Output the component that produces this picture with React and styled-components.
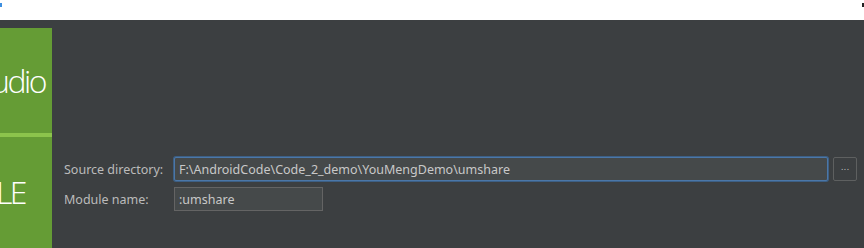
import styled, { createGlobalStyle } from "styled-components";

const GlobalStyle = createGlobalStyle`
  html, body {
    margin: 0;
    padding: 0;
    background: #3c3f41;
  }
  body {
    font-family: "Noto Sans", "Open Sans", sans-serif;
  }
`;

const Page = styled.div`
  width: 864px;
  height: 248px;
  display: flex;
  flex-direction: column;
  overflow: hidden;
`;

const TitleBar = styled.div`
  height: 20px;
  background: #ffffff;
  position: relative;
  flex-shrink: 0;
`;

const TitleMark = styled.span`
  position: absolute;
  top: 3px;
  width: 2px;
  height: 4px;
  background: ${(p) => p.$color};
  ${(p) => (p.$right ? "right: 0;" : "left: 0;")}
`;

const Body = styled.div`
  flex: 1;
  display: flex;
  background: #3c3f41;
`;

const Banner = styled.div`
  width: 52px;
  margin-top: 8px;
  background: #659c35;
  display: flex;
  flex-direction: column;
  overflow: hidden;
  flex-shrink: 0;
`;

const BannerBlock = styled.div`
  box-sizing: border-box;
  height: ${(p) => p.$height}px;
  display: flex;
  align-items: flex-start;
  justify-content: flex-end;
  padding: ${(p) => p.$top}px ${(p) => p.$pad}px 0 0;
  color: #ffffff;
  font-size: 32px;
  line-height: 32px;
  font-weight: 300;
  letter-spacing: -2.5px;
  white-space: nowrap;
  font-family: "Open Sans", "Noto Sans", sans-serif;
`;

const Stripe = styled.div`
  height: 4px;
  background: #8cc44c;
`;

const Content = styled.div`
  flex: 1;
  padding: 137px 7px 0 12px;
  display: flex;
  flex-direction: column;
  gap: 6px;
`;

const Row = styled.div`
  display: flex;
  align-items: center;
  height: 24px;
`;

const Label = styled.label`
  width: 110px;
  flex-shrink: 0;
  color: #bbbbbb;
  font-size: 12.5px;
`;

const Field = styled.div`
  box-sizing: border-box;
  height: 24px;
  ${(p) => (p.$grow ? "flex: 1;" : `width: ${p.$width}px;`)}
  background: #45494a;
  border: 1px solid ${(p) => (p.$focused ? "#4b77a8" : "#646464")};
  ${(p) =>
    p.$focused &&
    "box-shadow: 0 0 0 1px #3d5f84; border-radius: 2px;"}
  color: #c8c8c8;
  font-size: 12.5px;
  padding-left: 4px;
  display: flex;
  align-items: center;
  white-space: nowrap;
`;

const BrowseButton = styled.button`
  box-sizing: border-box;
  width: 24px;
  height: 24px;
  margin-left: 5px;
  background: #3c3f41;
  border: 1px solid #5e6060;
  border-radius: 2px;
  color: #bbbbbb;
  font-size: 9px;
  padding: 0 0 4px;
  display: flex;
  align-items: center;
  justify-content: center;
  font-family: "DejaVu Sans", sans-serif;
`;

export default function App() {
  return (
    <>
      <GlobalStyle />
      <Page>
        <TitleBar>
          <TitleMark $color="#3d8fe0" />
          <TitleMark $color="#222222" $right />
        </TitleBar>
        <Body>
          <Banner>
            <BannerBlock $height={105} $top={37} $pad={7}>
              Android Studio
            </BannerBlock>
            <Stripe />
            <BannerBlock $height={111} $top={39} $pad={27}>
              GRADLE
            </BannerBlock>
          </Banner>
          <Content>
            <Row>
              <Label>Source directory:</Label>
              <Field $grow $focused>
                F:\AndroidCode\Code_2_demo\YouMengDemo\umshare
              </Field>
              <BrowseButton>...</BrowseButton>
            </Row>
            <Row>
              <Label>Module name:</Label>
              <Field $width={149}>:umshare</Field>
            </Row>
          </Content>
        </Body>
      </Page>
    </>
  );
}
